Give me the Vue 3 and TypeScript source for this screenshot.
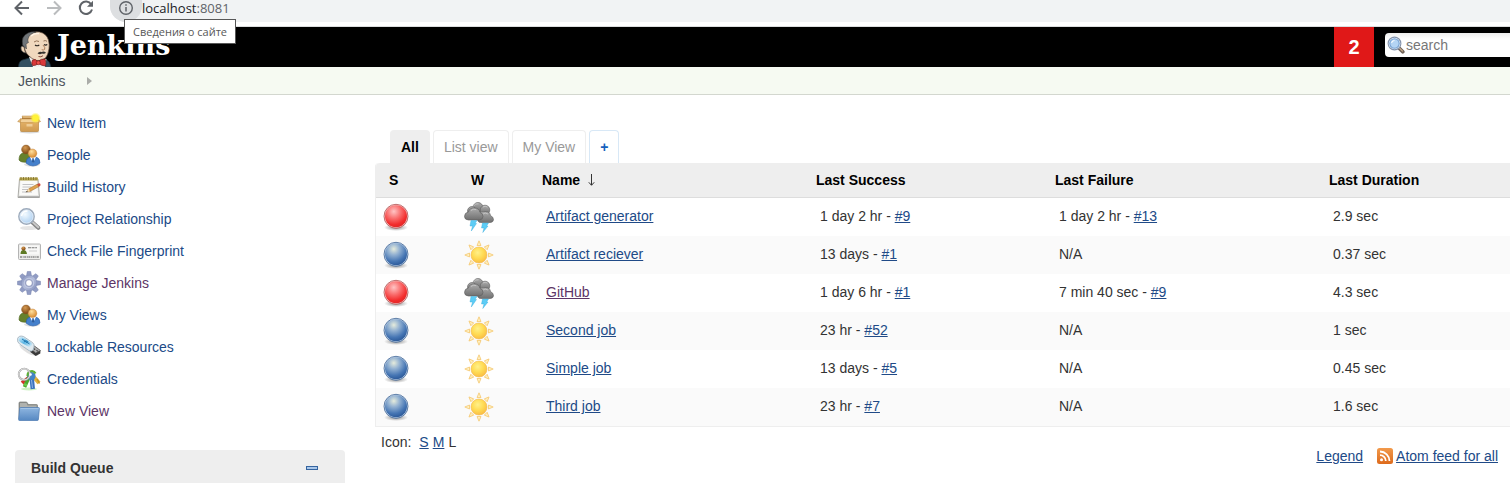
<script setup lang="ts">
import { ref } from 'vue'

interface Task { label: string; icon: string; visited?: boolean }
interface Run { ago: string; build: string }
interface Job { name: string; ok: boolean; visited?: boolean; success: Run; failure: Run | null; duration: string }

const tasks: Task[] = [
  { label: 'New Item', icon: 'box' },
  { label: 'People', icon: 'people' },
  { label: 'Build History', icon: 'notepad' },
  { label: 'Project Relationship', icon: 'search' },
  { label: 'Check File Fingerprint', icon: 'card' },
  { label: 'Manage Jenkins', icon: 'gear', visited: true },
  { label: 'My Views', icon: 'people' },
  { label: 'Lockable Resources', icon: 'usb' },
  { label: 'Credentials', icon: 'keys' },
  { label: 'New View', icon: 'folder', visited: true },
]

const jobs: Job[] = [
  { name: 'Artifact generator', ok: false, success: { ago: '1 day 2 hr', build: '#9' }, failure: { ago: '1 day 2 hr', build: '#13' }, duration: '2.9 sec' },
  { name: 'Artifact reciever', ok: true, success: { ago: '13 days', build: '#1' }, failure: null, duration: '0.37 sec' },
  { name: 'GitHub', ok: false, visited: true, success: { ago: '1 day 6 hr', build: '#1' }, failure: { ago: '7 min 40 sec', build: '#9' }, duration: '4.3 sec' },
  { name: 'Second job', ok: true, success: { ago: '23 hr', build: '#52' }, failure: null, duration: '1 sec' },
  { name: 'Simple job', ok: true, success: { ago: '13 days', build: '#5' }, failure: null, duration: '0.45 sec' },
  { name: 'Third job', ok: true, success: { ago: '23 hr', build: '#7' }, failure: null, duration: '1.6 sec' },
]

const query = ref('')
const gearTeeth = [0, 45, 90, 135, 180, 225, 270, 315]
</script>

<template>
  <svg class="sprite" aria-hidden="true">
    <defs>
      <radialGradient id="gRed" cx=".4" cy=".28" r=".75">
        <stop offset="0" stop-color="#ffc4c4" /><stop offset=".45" stop-color="#f96a6a" /><stop offset=".8" stop-color="#f22c2c" /><stop offset="1" stop-color="#e02828" />
      </radialGradient>
      <radialGradient id="gBlue" cx=".4" cy=".26" r=".75">
        <stop offset="0" stop-color="#e6ecdc" /><stop offset=".35" stop-color="#94b2d2" /><stop offset=".75" stop-color="#4676b4" /><stop offset="1" stop-color="#2c5a9a" />
      </radialGradient>
      <radialGradient id="gShadow">
        <stop offset="0" stop-color="#000" stop-opacity=".45" /><stop offset="1" stop-color="#000" stop-opacity="0" />
      </radialGradient>
      <radialGradient id="gSun" cx=".42" cy=".35" r=".7">
        <stop offset="0" stop-color="#fff08a" /><stop offset=".5" stop-color="#ffdc55" /><stop offset="1" stop-color="#f9b940" />
      </radialGradient>
      <radialGradient id="gGlow">
        <stop offset="0" stop-color="#fff98a" /><stop offset=".5" stop-color="#fbee35" /><stop offset="1" stop-color="#fbee35" stop-opacity="0" />
      </radialGradient>
      <linearGradient id="gCloud" x1="0" y1="0" x2="0" y2="1">
        <stop offset="0" stop-color="#acacac" /><stop offset="1" stop-color="#707070" />
      </linearGradient>
      <linearGradient id="gBox" x1="0" y1="0" x2="0" y2="1">
        <stop offset="0" stop-color="#e6b469" /><stop offset="1" stop-color="#cf9a50" />
      </linearGradient>
      <radialGradient id="gLens" cx=".4" cy=".35" r=".7">
        <stop offset="0" stop-color="#f4fbff" /><stop offset="1" stop-color="#a9cdf0" />
      </radialGradient>
      <radialGradient id="gSkin" cx=".4" cy=".3" r=".7">
        <stop offset="0" stop-color="#ffdf9c" /><stop offset="1" stop-color="#d98a30" />
      </radialGradient>
      <radialGradient id="gBrown" cx=".4" cy=".3" r=".7">
        <stop offset="0" stop-color="#d69a52" /><stop offset="1" stop-color="#7c4512" />
      </radialGradient>
      <linearGradient id="gGear" x1="0" y1="0" x2="1" y2="1">
        <stop offset="0" stop-color="#8491bd" /><stop offset=".5" stop-color="#b4bdda" /><stop offset="1" stop-color="#808dbb" />
      </linearGradient>
      <linearGradient id="gFolder" x1="0" y1="0" x2="0" y2="1">
        <stop offset="0" stop-color="#8fb6e0" /><stop offset="1" stop-color="#5688c2" />
      </linearGradient>
      <linearGradient id="gUsb" x1="0" y1="0" x2="1" y2="1">
        <stop offset="0" stop-color="#d8f0fc" /><stop offset=".5" stop-color="#58b4e4" /><stop offset="1" stop-color="#e8f4fa" />
      </linearGradient>
      <linearGradient id="gRss" x1="0" y1="0" x2="0" y2="1">
        <stop offset="0" stop-color="#f29a4c" /><stop offset="1" stop-color="#dd6a1c" />
      </linearGradient>
    </defs>

    <symbol id="box" viewBox="0 0 24 24">
      <ellipse cx="12.500" cy="21" rx="10" ry="1.500" fill="#000" opacity=".15" />
      <path d="M3.500 9h18v10.500q0 1-1 1h-16q-1 0-1-1z" fill="url(#gBox)" stroke="#bb883f" stroke-width=".7" />
      <path d="M4 9l2-4h12l3 4z" fill="#a87535" />
      <path d="M5 5h12l1 2H6z" fill="#e8c084" stroke="#bb8840" stroke-width=".5" />
      <path d="M4 7.500L.7 10.500 4 11.500zM21 7.500l2.500 3-2.500 1z" fill="#ecc484" stroke="#b9853b" stroke-width=".6" />
      <path d="M4 8h17l.7 3.500H3.300z" fill="#f2d19a" stroke="#c08d45" stroke-width=".5" />
      <path d="M9.500 13h6v2.500h-6z" fill="#f6dcae" opacity=".7" />
      <circle cx="18.500" cy="7" r="5.500" fill="url(#gGlow)" />
      <circle cx="18.500" cy="7" r="3" fill="#fff23a" />
    </symbol>

    <symbol id="people" viewBox="0 0 24 24">
      <ellipse cx="15" cy="21.500" rx="8" ry="2" fill="#000" opacity=".12" />
      <path d="M2 17q0-6 4-7h6q3 1 3 5l-4 4q-7 1-9-2z" fill="#66812c" stroke="#4c641c" stroke-width=".6" />
      <circle cx="9" cy="6.500" r="4.400" fill="url(#gBrown)" stroke="#8a5824" stroke-width=".5" />
      <path d="M9 20q0-5 4-6h6q4 1 4 6-3 3-7 3t-7-3z" fill="#4480cc" stroke="#2a5ca4" stroke-width=".6" />
      <path d="M13 14l3 6 3-6z" fill="#fff" /><path d="M15.500 15h1l1 4-1.500 1-1.200-1z" fill="#2d5d9f" />
      <circle cx="15.500" cy="10.300" r="4.300" fill="url(#gSkin)" stroke="#c98740" stroke-width=".5" />
    </symbol>

    <symbol id="notepad" viewBox="0 0 24 24">
      <path d="M2.500 4h18.500l1.500 18.500H1z" fill="#e9e9e6" stroke="#9b9b96" stroke-width=".8" />
      <path d="M3.500 6h16.500l1 14H2.500z" fill="#fafaf8" />
      <path d="M2.500 2.500h18.500v3H2.500z" fill="#b8a850" />
      <path d="M4 2v3M6.500 2v3M9 2v3M11.500 2v3M14 2v3M16.500 2v3M19 2v3" stroke="#7d6d28" stroke-width=".8" />
      <path d="M5.500 9.500h11M5.500 12h9M5 14.500h6M5 17h10" stroke="#b5b5b8" stroke-width=".8" />
      <path d="M1.500 21.800h20.500" stroke="#8a8a8a" stroke-width=".8" />
      <path d="M9.500 16.800l2.200-3 8.800-4.800 1.500 2.500-9 5z" fill="#dfa24e" stroke="#9c682b" stroke-width=".5" />
      <path d="M20 9.200l1.500-.8q1.500-.2 2 .8l-.2 1.500-1.500 1z" fill="#c9503c" />
      <path d="M9.500 16.800l2.200-3 1.300 2.700z" fill="#f4dfb8" /><path d="M8.500 17.300l1.600-1.400.6 1z" fill="#333" />
    </symbol>

    <symbol id="search" viewBox="0 0 24 24">
      <ellipse cx="12" cy="21" rx="9" ry="2" fill="#000" opacity=".1" />
      <path d="M15.500 15.500l5.800 5.300" stroke="#858585" stroke-width="4" stroke-linecap="round" />
      <path d="M15.500 15l5.800 5.300" stroke="#c8c8c8" stroke-width="2" stroke-linecap="round" />
      <circle cx="9.500" cy="9.500" r="7.500" fill="url(#gLens)" stroke="#9dabbc" stroke-width="1.800" />
      <circle cx="9.500" cy="9.500" r="6.600" fill="none" stroke="#e9f3fc" stroke-width=".8" />
      <path d="M4.500 9q1-5 6-5" fill="none" stroke="#fff" stroke-width="1.500" />
    </symbol>

    <symbol id="card" viewBox="0 0 24 24">
      <rect x="1.500" y="5" width="22" height="15.500" rx="1" fill="#ededeb" stroke="#b4b4b4" />
      <rect x="3" y="6.500" width="19" height="9" fill="#f8f8f7" />
      <path d="M3.500 15q0-4 3-4t3.500 4z" fill="#5e7a24" /><circle cx="6.500" cy="9.500" r="2.100" fill="url(#gBrown)" />
      <path d="M11 8.800h9" stroke="#777" stroke-width="1.100" stroke-dasharray="3 .6" /><path d="M12 12h8" stroke="#ccc" />
      <path d="M3 18h19" stroke="#888" stroke-width="1.300" stroke-dasharray="2 .7 1 .5" />
    </symbol>

    <symbol id="gear" viewBox="0 0 24 24">
      <g fill="#919cc4" stroke="#7581ad" stroke-width=".5">
        <path v-for="a in gearTeeth" :key="a" d="M9.300 6l1-5.500h3.400l1 5.500z" :transform="`rotate(${a} 12 12)`" />
      </g>
      <circle cx="12" cy="12" r="7.800" fill="url(#gGear)" stroke="#808cb6" stroke-width=".5" />
      <circle cx="12" cy="12" r="4.800" fill="none" stroke="#c5cde6" stroke-width="1" />
      <circle cx="12" cy="12" r="3.400" fill="#fff" stroke="#7d88b2" stroke-width=".8" />
    </symbol>

    <symbol id="usb" viewBox="0 0 24 24">
      <path d="M2 10q2 5 12 10l7 1-5-6z" fill="#000" opacity=".12" />
      <path d="M13.500 13.500l4-2.500 6 4.500-.2 3-4.600 2.500-5.400-4z" fill="#3a3a3a" />
      <path d="M13.500 13.500l4-2.500 6 4.500-4.800 2.500z" fill="#a9a9a9" stroke="#444" stroke-width=".5" />
      <path d="M17 13.200l1.500 1-1 .6-1.500-1zM20 15.200l1.300.9-1 .5-1.300-.9z" fill="#222" />
      <path d="M.6 3.500Q2 0 6.500 1.500L15.500 7.500q2 1.800 1.500 4l-.6 3q-1.600 2.500-4.200 1.200L3 9.500Q-.3 7 .6 3.500z" fill="#dfe9ef" stroke="#8fa5b3" stroke-width=".7" />
      <path d="M1.600 3.500Q3 1.200 6 2.400l8.500 5.600q1.500 1.400 0 3-1.500 1.500-3.500.4L3 7q-2-1.700-1.400-3.500z" fill="url(#gUsb)" />
      <path d="M5 4l7.500 5M7 6.500l2.500-.8M9.500 8l1-2" stroke="#1b6fa8" stroke-width=".9" fill="none" />
    </symbol>

    <symbol id="keys" viewBox="0 0 24 24">
      <ellipse cx="12" cy="22" rx="8" ry="1.500" fill="#60d040" opacity=".3" />
      <path d="M12 10l-6.500 5.500" stroke="#d4342a" stroke-width="3" /><path d="M4.500 14l3 3" stroke="#d4342a" stroke-width="2" />
      <path d="M15 8l7 8" stroke="#dfb340" stroke-width="4" /><path d="M20 12l2.500 4.500" stroke="#c49222" stroke-width="1.500" />
      <path d="M12.500 9L7.500 20" stroke="#4ba82e" stroke-width="3.600" /><path d="M7 17l3 1.500" stroke="#6cca4a" stroke-width="2.500" />
      <path d="M14.500 9l1.300 13" stroke="#3a72bd" stroke-width="4.400" /><path d="M14.500 13l1 8" stroke="#8db4e4" stroke-width="1" />
      <circle cx="14.500" cy="9" r="4" fill="#4384c4" /><path d="M10.500 9q0-5 4.500-5 2.500.5 3.500 2.500" stroke="#5db035" stroke-width="2.200" fill="none" />
      <circle cx="7.300" cy="7.300" r="5.600" fill="none" stroke="#9a9a9a" stroke-width="1.800" />
      <circle cx="7.300" cy="7.300" r="5.600" fill="none" stroke="#ececec" stroke-width=".9" />
      <circle cx="13.500" cy="7.500" r="1.300" fill="#fff" />
    </symbol>

    <symbol id="folder" viewBox="0 0 24 24">
      <path d="M2 20V4q0-1 1-1h6q1 0 1.500 1l.5 1.500h8.500q1 0 1 1V19z" fill="#8c8e8a" stroke="#7a7c78" stroke-width=".7" />
      <path d="M3 4h6.500l1 2.500h9V9H3z" fill="#b0b2ae" />
      <path d="M3.500 8.500h18q1 0 .9 1l-1 11q-.1 1-1 1H2.500q-1 0-.9-1l1-11q.1-1 .9-1z" fill="url(#gFolder)" stroke="#4a78b0" stroke-width=".7" />
      <path d="M3.500 9.500h18" stroke="#a9c8e8" stroke-width=".8" />
    </symbol>

    <symbol id="red" viewBox="0 0 32 32">
      <ellipse cx="16" cy="26.500" rx="12" ry="3.500" fill="url(#gShadow)" />
      <circle cx="16" cy="15.300" r="12" fill="#f3caca" stroke="#b05050" stroke-width=".8" /><circle cx="16" cy="15.300" r="11" fill="url(#gRed)" />
    </symbol>
    <symbol id="blue" viewBox="0 0 32 32">
      <ellipse cx="16" cy="26.500" rx="12" ry="3.500" fill="url(#gShadow)" />
      <circle cx="16" cy="15.300" r="12" fill="#c2d3e8" stroke="#3f6594" stroke-width=".8" /><circle cx="16" cy="15.300" r="11" fill="url(#gBlue)" />
    </symbol>
    <symbol id="sunny" viewBox="0 0 32 32">
      <g fill="#fff0c0" stroke="#f5c870" stroke-width=".8">
        <path v-for="a in gearTeeth" :key="a" d="M14 6.500L16 1.800l2 4.700z" :transform="`rotate(${a} 16 16)`" />
      </g>
      <circle cx="16" cy="16" r="8" fill="url(#gSun)" stroke="#f3b850" stroke-width=".6" />
    </symbol>
    <symbol id="storm" viewBox="0 0 32 32">
      <g fill="url(#gCloud)" stroke="#5c5c5c" stroke-width=".6">
        <circle cx="15" cy="6.500" r="5" /><circle cx="9" cy="10" r="4.500" /><circle cx="22" cy="9" r="4.800" />
        <path d="M15 20q-2-3 1-6.500 2-4 6-3 5 0 5.500 4 3 1.500 3 4t-3 3H18q-2.500 0-3-1.500z" />
        <path d="M1.500 15.500q0-4 4-4.500 1-4.500 6-4 4.500 0 5.500 4.500 3 1 3 4t-3.500 3.500H5.500q-4-.2-4-3.500z" />
      </g>
      <path d="M10.500 5q2-3 5-2.200M20 6q2-1.500 4.500 0M8 9.500q2-2 5-1M20 13q2-1.800 5 0" fill="none" stroke="#cacaca" stroke-width=".8" />
      <path d="M8 19.500h6l-2 3h1.500L8.300 30l1.200-5H7z" fill="#5ccdf6" stroke="#35a9dc" stroke-width=".4" />
      <path d="M19.500 22h6l-2 3H25l-5.200 6.500 1.200-4.500h-2.500z" fill="#5ccdf6" stroke="#35a9dc" stroke-width=".4" />
    </symbol>
  </svg>

  <div class="browser">
    <button class="nav" aria-label="Back">
      <svg width="16" height="16" viewBox="0 0 16 16"><path d="M15 8H2M8 1.500L1.500 8 8 14.500" fill="none" stroke="#5f6368" stroke-width="2" /></svg>
    </button>
    <button class="nav" aria-label="Forward">
      <svg width="16" height="16" viewBox="0 0 16 16"><path d="M1 8h13M8 1.500L14.500 8 8 14.500" fill="none" stroke="#babcbe" stroke-width="2" /></svg>
    </button>
    <button class="nav" aria-label="Reload">
      <svg width="16" height="16" viewBox="0 0 16 16"><path d="M13.200 4.300A6.200 6.200 0 1 0 14 9.500" fill="none" stroke="#5f6368" stroke-width="2" /><path d="M15 .8v6H9z" fill="#5f6368" /></svg>
    </button>
    <div class="address">
      <button class="info" aria-describedby="site-tip" aria-label="i">
        <svg width="16" height="16" viewBox="0 0 16 16"><circle cx="8" cy="8" r="6.300" fill="none" stroke="#5f6368" stroke-width="1.400" /><path d="M8 7v4.500M8 4.300v1.500" stroke="#5f6368" stroke-width="1.500" /></svg>
      </button>
      <span class="url">localhost<span class="port">:8081</span></span>
      <span id="site-tip" class="tip" role="tooltip">Сведения о сайте</span>
    </div>
  </div>

  <header class="masthead">
    <a class="brand" href="#">
      <svg width="34" height="38" viewBox="0 0 34 38" aria-hidden="true">
        <path d="M.5 38q0-7 4-8l7-2 5 6h10l2-4q3.500 1 4.500 8z" fill="#335061" stroke="#1c2d38" stroke-width=".8" />
        <path d="M11 27l4 10h12l1.500-8z" fill="#f0f0f0" />
        <path d="M6 17q-3-2-3 1 0 4 4.500 5z" fill="#efd3b4" stroke="#555" stroke-width=".7" />
        <path d="M7 20Q4 9 9.500 5q5-4 12-3 7 1.500 9 8 1.200 4.500.5 9-1 6-3.500 9-4 3.500-9 2.500-5-1.500-8-5-2.500-2-3.500-5.500z" fill="#f0d8be" stroke="#5a4638" stroke-width=".7" />
        <path d="M4.500 15Q3 6 10 3q4-2 8-1-7 2-8 7-.5 2 .5 3.500L8 14l.5 5-2-2z" fill="#6f7478" stroke="#333" stroke-width=".5" />
        <path d="M13 6q3-3 8-2.500" stroke="#fff4e6" stroke-width="1.500" fill="none" />
        <path d="M16 12q2.500-2 5-.5M25.500 11q2-1 3.500.3" stroke="#8a684c" stroke-width=".9" fill="none" />
        <path d="M17 15q2 1.500 4.300 0M26 14.500q1.500 1.200 3.300 0" stroke="#2a2420" stroke-width="1.100" fill="none" />
        <path d="M25 15q2.500 2.500 1.700 4.300-1.200 1.200-3 .4" stroke="#b07f5a" fill="none" />
        <path d="M19.500 23.500q1.500-2.500 4-1.500 2.500-1.300 4.500.8-1.500 1.700-4 .7-2 1.300-4.500 0z" fill="#36322e" />
        <path d="M20.500 26.500q2.500 1 4.500-.8" stroke="#7c3d31" stroke-width=".9" fill="none" />
        <path d="M14.500 30q3-1.500 5.500 1.500 3-3 7-2.500 1.500 3 .5 7-4-.2-7-2.500-3 2.500-6 2-1.500-3 0-5.500z" fill="#d9383a" stroke="#6e1513" stroke-width=".7" />
        <circle cx="20.300" cy="32.700" r="2" fill="#ef4b48" stroke="#6e1513" stroke-width=".6" />
      </svg>
      <span class="wordmark">Jenkins</span>
    </a>
    <a class="alerts" href="#">2</a>
    <label class="search">
      <svg width="18" height="18" viewBox="0 0 24 24" aria-hidden="true">
        <path d="M16 16l5 5" stroke="#71645a" stroke-width="5" stroke-linecap="round" /><path d="M16 15.500l5 5" stroke="#d3b491" stroke-width="1.500" />
        <circle cx="10" cy="10" r="8.500" fill="#fff" stroke="#8292ac" stroke-width="1.500" /><circle cx="10" cy="10" r="6.300" fill="#b4d4f4" stroke="#74a0d2" stroke-width="1.500" /><path d="M6 9q1-3 4-3" stroke="#fff" stroke-width="1.500" fill="none" />
      </svg>
      <input v-model="query" type="text" placeholder="search" aria-label="search" />
    </label>
  </header>

  <nav class="crumbs">
    <a href="#">Jenkins</a>
    <svg width="5" height="8" viewBox="0 0 5 8" aria-hidden="true"><path d="M0 0l5 4-5 4z" fill="#aaaca8" /></svg>
  </nav>

  <div class="page">
    <aside class="side">
      <nav class="tasks">
        <a v-for="t in tasks" :key="t.label" href="#" :class="{ visited: t.visited }">
          <svg width="24" height="24" aria-hidden="true"><use :href="'#' + t.icon" /></svg>
          <span>{{ t.label }}</span>
        </a>
      </nav>
      <section class="queue">
        <h2>Build Queue</h2>
        <button aria-label="collapse"><svg width="12" height="4" viewBox="0 0 12 4"><rect x=".5" y=".5" width="11" height="3" fill="#a9c7ea" stroke="#35649f" /></svg></button>
      </section>
    </aside>

    <main>
      <div class="tabs">
        <a class="active" href="#">All</a>
        <a href="#">List view</a>
        <a href="#">My View</a>
        <a class="add" href="#">+</a>
      </div>
      <table>
        <colgroup><col class="c-s" /><col class="c-w" /><col class="c-name" /><col class="c-ok" /><col class="c-name" /><col /></colgroup>
        <thead>
          <tr>
            <th>S</th><th>W</th>
            <th>
              <span class="sorted">Name
                <svg width="7" height="12" viewBox="0 0 7 12" aria-label="sorted ascending"><path d="M3.500 0v11M.8 8.300l2.700 3 2.700-3" fill="none" stroke="#333" /></svg>
              </span>
            </th>
            <th>Last Success</th><th>Last Failure</th><th>Last Duration</th>
          </tr>
        </thead>
        <tbody>
          <tr v-for="j in jobs" :key="j.name">
            <td class="pic"><svg width="32" height="32" aria-hidden="true"><use :href="j.ok ? '#blue' : '#red'" /></svg></td>
            <td class="pic weather"><svg width="32" height="32" aria-hidden="true"><use :href="j.ok ? '#sunny' : '#storm'" /></svg></td>
            <td><a href="#" :class="{ visited: j.visited }">{{ j.name }}</a></td>
            <td>{{ j.success.ago }} - <a href="#">{{ j.success.build }}</a></td>
            <td><template v-if="j.failure">{{ j.failure.ago }} - <a href="#">{{ j.failure.build }}</a></template><template v-else>N/A</template></td>
            <td>{{ j.duration }}</td>
          </tr>
        </tbody>
      </table>
      <div class="sizes"><span class="sizes-label">Icon:</span><a href="#">S</a><a href="#">M</a><span>L</span></div>
      <div class="feeds">
        <a href="#">Legend</a>
        <a class="feed" href="#">
          <svg width="16" height="16" viewBox="0 0 16 16" aria-hidden="true"><rect width="16" height="16" rx="2.500" fill="url(#gRss)" /><circle cx="4.500" cy="11.700" r="1.500" fill="#fff" /><path d="M3 7.200a5.800 5.800 0 0 1 5.800 5.800M3 3.500A9.500 9.500 0 0 1 12.500 13" fill="none" stroke="#fff" stroke-width="1.800" /></svg>
          <span>Atom feed for all</span>
        </a>
      </div>
    </main>
  </div>
</template>

<style>
body { margin: 0; background: #fff; }
#app { font: 14px/20px "Liberation Sans", Arial, sans-serif; color: #333; height: 100vh; overflow: hidden; }
</style>

<style scoped>
* { box-sizing: border-box; }
a { color: #204a87; }
a.visited { color: #5c3566; }
svg { display: block; flex: none; }
button { border: 0; padding: 0; background: none; }
.sprite { position: absolute; width: 0; height: 0; }

.browser { display: flex; gap: 16px; height: 27px; padding-left: 14px; border-bottom: 1px solid #dcdedf; }
.nav { height: 16px; }
.address { position: relative; flex: 1; display: flex; height: 22px; background: #f1f3f4; border-radius: 0 0 0 16px; }
.info { display: flex; justify-content: center; width: 32px; height: 22px; background: #dddfe1; border-radius: 0 0 16px 16px; }
.url { font: 13px/16px "Open Sans", sans-serif; color: #202124; }
.port { color: #5f6368; }
.tip { position: absolute; left: 14px; top: 19px; z-index: 2; padding: 0 8px; border: 1px solid #575757; background: #fff; color: #575757; font: 11px/23px "Open Sans", sans-serif; white-space: nowrap; }

.masthead { display: flex; align-items: center; height: 40px; background: #000; }
.brand { display: flex; gap: 5px; height: 40px; padding: 3px 0 0 18px; margin-right: auto; text-decoration: none; overflow: hidden; }
.wordmark { color: #fff; font: bold 27px/32px "DejaVu Serif", serif; }
.alerts { width: 40px; margin-right: 11px; background: #e01818; color: #fff; font-size: 20px; line-height: 40px; font-weight: bold; text-align: center; text-decoration: none; }
.search { display: flex; align-items: center; gap: 1px; width: 125px; height: 24px; padding-left: 2px; margin-bottom: 4px; border-radius: 4px 0 0 4px; background: linear-gradient(#eee, #fff 6px); }
.search input { flex: 1; min-width: 0; border: 0; padding: 0; outline: 0; background: none; font: inherit; color: #333; }
.search input::placeholder { color: #777; opacity: 1; }

.crumbs { display: flex; align-items: center; gap: 22px; height: 28px; padding-left: 18px; background: #f6faf2; border-bottom: 1px solid #d3d7cf; }
.crumbs a { color: #4d545d; text-decoration: none; }

.page { display: flex; gap: 30px; padding-left: 15px; }
.side { width: 330px; flex: none; padding-top: 12px; }
.tasks a { display: flex; align-items: center; gap: 6px; height: 32px; padding-left: 2px; text-decoration: none; }
.queue { display: flex; align-items: center; justify-content: space-between; height: 36px; margin-top: 23px; padding: 0 27px 0 16px; border-radius: 4px 4px 0 0; background: #eee; }
.queue h2 { margin: 0; font-size: 14px; }

main { flex: 1; min-width: 0; padding-top: 35px; }
.tabs { display: flex; gap: 3px; padding-left: 15px; }
.tabs a { height: 33px; padding: 0 10px; border: 1px solid #eee; border-bottom: 0; border-radius: 4px 4px 0 0; color: #999; line-height: 32px; text-decoration: none; }
.tabs .active { background: #eee; color: #000; font-weight: bold; }
.tabs .add { border-color: #d8e8f6; color: #1560bd; font-weight: bold; }

table { width: 100%; table-layout: fixed; border-collapse: separate; border-spacing: 0; border: solid #eee; border-width: 0 0 1px 1px; border-radius: 4px 0 0 0; }
.c-s { width: 82px; }
.c-w { width: 71px; }
.c-name { width: 274px; }
.c-ok { width: 239px; }
th { height: 35px; padding: 0 0 0 13px; background: #eee; border-bottom: 1px solid #ddd; color: #000; text-align: left; }
th:first-child { border-radius: 4px 0 0 0; }
.sorted { display: flex; align-items: center; gap: 8px; }
td { height: 38px; padding: 0 0 2px 17px; }
td.pic { padding: 0 0 0 4px; }
td.weather { padding-left: 5px; }
tbody tr:nth-child(even) { background: #fafafa; }

.sizes { display: flex; gap: 4px; padding: 5px 0 0 6px; }
.sizes-label { margin-right: 4px; }
.feeds { display: flex; justify-content: flex-end; gap: 14px; padding: 0 12px 0 0; margin-top: -6px; }
.feed { display: flex; align-items: center; gap: 3px; }
</style>
